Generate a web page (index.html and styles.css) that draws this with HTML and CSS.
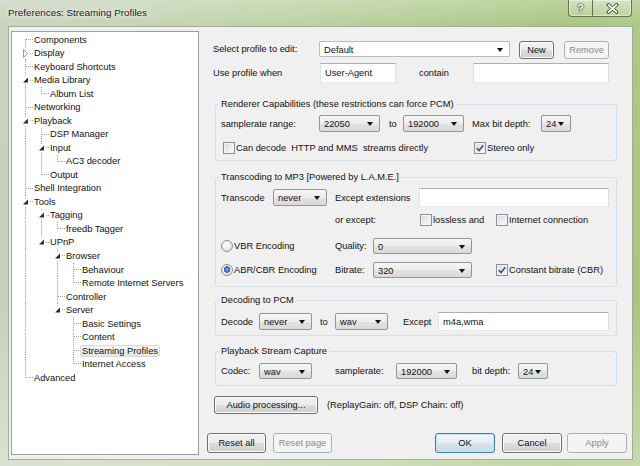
FILE: index.html
```html
<!DOCTYPE html>
<html>
<head>
<meta charset="utf-8">
<title>Preferences: Streaming Profiles</title>
<link rel="stylesheet" href="styles.css">
</head>
<body>
<div class="window">
  <div class="titlebar">
    <div class="title">Preferences: Streaming Profiles</div>
    <div class="caps">
      <div class="cap help">?</div>
      <div class="cap close">
        <svg width="13" height="11" viewBox="0 0 13 11"><path d="M2.5 2 L10.5 9 M10.5 2 L2.5 9" stroke="#3d4a35" stroke-width="3.6" stroke-linecap="round"/><path d="M2.5 2 L10.5 9 M10.5 2 L2.5 9" stroke="#fff" stroke-width="1.7" stroke-linecap="round"/></svg>
      </div>
    </div>
  </div>
  <div class="client">
    <div class="tree">
      <div class="row"><i class="g f"></i><span class="tx">Components</span></div>
      <div class="row"><i class="g t"><svg class="ex" width="7" height="9" viewBox="0 0 7 9"><path d="M1.5 0.5 L5.5 4.5 L1.5 8.5 Z" fill="#fff" stroke="#9a9a9a"/></svg></i><span class="tx">Display</span></div>
      <div class="row"><i class="g t"></i><span class="tx">Keyboard Shortcuts</span></div>
      <div class="row"><i class="g t"><svg class="ex" width="7" height="8" viewBox="0 0 7 8"><path d="M6 1.5 L6 6.5 L1 6.5 Z" fill="#2b2b2b"/></svg></i><span class="tx">Media Library</span></div>
      <div class="row"><i class="g v"></i><i class="g l"></i><span class="tx">Album List</span></div>
      <div class="row"><i class="g t"></i><span class="tx">Networking</span></div>
      <div class="row"><i class="g t"><svg class="ex" width="7" height="8" viewBox="0 0 7 8"><path d="M6 1.5 L6 6.5 L1 6.5 Z" fill="#2b2b2b"/></svg></i><span class="tx">Playback</span></div>
      <div class="row"><i class="g v"></i><i class="g t"></i><span class="tx">DSP Manager</span></div>
      <div class="row"><i class="g v"></i><i class="g t"><svg class="ex" width="7" height="8" viewBox="0 0 7 8"><path d="M6 1.5 L6 6.5 L1 6.5 Z" fill="#2b2b2b"/></svg></i><span class="tx">Input</span></div>
      <div class="row"><i class="g v"></i><i class="g v"></i><i class="g l"></i><span class="tx">AC3 decoder</span></div>
      <div class="row"><i class="g v"></i><i class="g l"></i><span class="tx">Output</span></div>
      <div class="row"><i class="g t"></i><span class="tx">Shell Integration</span></div>
      <div class="row"><i class="g t"><svg class="ex" width="7" height="8" viewBox="0 0 7 8"><path d="M6 1.5 L6 6.5 L1 6.5 Z" fill="#2b2b2b"/></svg></i><span class="tx">Tools</span></div>
      <div class="row"><i class="g v"></i><i class="g t"><svg class="ex" width="7" height="8" viewBox="0 0 7 8"><path d="M6 1.5 L6 6.5 L1 6.5 Z" fill="#2b2b2b"/></svg></i><span class="tx">Tagging</span></div>
      <div class="row"><i class="g v"></i><i class="g v"></i><i class="g l"></i><span class="tx">freedb Tagger</span></div>
      <div class="row"><i class="g v"></i><i class="g l"><svg class="ex" width="7" height="8" viewBox="0 0 7 8"><path d="M6 1.5 L6 6.5 L1 6.5 Z" fill="#2b2b2b"/></svg></i><span class="tx">UPnP</span></div>
      <div class="row"><i class="g v"></i><i class="g"></i><i class="g t"><svg class="ex" width="7" height="8" viewBox="0 0 7 8"><path d="M6 1.5 L6 6.5 L1 6.5 Z" fill="#2b2b2b"/></svg></i><span class="tx">Browser</span></div>
      <div class="row"><i class="g v"></i><i class="g"></i><i class="g v"></i><i class="g t"></i><span class="tx">Behaviour</span></div>
      <div class="row"><i class="g v"></i><i class="g"></i><i class="g v"></i><i class="g l"></i><span class="tx">Remote Internet Servers</span></div>
      <div class="row"><i class="g v"></i><i class="g"></i><i class="g t"></i><span class="tx">Controller</span></div>
      <div class="row"><i class="g v"></i><i class="g"></i><i class="g l"><svg class="ex" width="7" height="8" viewBox="0 0 7 8"><path d="M6 1.5 L6 6.5 L1 6.5 Z" fill="#2b2b2b"/></svg></i><span class="tx">Server</span></div>
      <div class="row"><i class="g v"></i><i class="g"></i><i class="g"></i><i class="g t"></i><span class="tx">Basic Settings</span></div>
      <div class="row"><i class="g v"></i><i class="g"></i><i class="g"></i><i class="g t"></i><span class="tx">Content</span></div>
      <div class="row"><i class="g v"></i><i class="g"></i><i class="g"></i><i class="g t"></i><span class="tx sel">Streaming Profiles</span></div>
      <div class="row"><i class="g v"></i><i class="g"></i><i class="g"></i><i class="g l"></i><span class="tx">Internet Access</span></div>
      <div class="row"><i class="g l"></i><span class="tx">Advanced</span></div>
    </div>

    <div class="main">
      <div class="page">
        <div class="line r1">
          <span class="lbl w106">Select profile to edit:</span>
          <div class="combo white w191"><span>Default</span><i class="arr"></i></div>
          <button class="btn small mr10 w35 ml9">New</button>
          <button class="btn small w45" disabled>Remove</button>
        </div>
        <div class="line r2">
          <span class="lbl w107">Use profile when</span>
          <div class="edit w76">User-Agent</div>
          <span class="lbl w54 ml23">contain</span>
          <div class="edit w136"></div>
        </div>

        <fieldset class="grp g1">
          <legend>Renderer Capabilities (these restrictions can force PCM)</legend>
          <div class="line h17">
            <span class="lbl w98">samplerate range:</span>
            <div class="combo w61"><span>22050</span><i class="arr"></i></div>
            <span class="lbl w14 ml9">to</span>
            <div class="combo w61"><span>192000</span><i class="arr"></i></div>
            <span class="lbl w69 ml8">Max bit depth:</span>
            <div class="combo w30"><span>24</span><i class="arr"></i></div>
          </div>
          <div class="line h13 mt9">
            <span class="opt w251 ml2"><span class="chk"></span>Can decode&nbsp; HTTP and MMS&nbsp; streams directly</span>
            <span class="opt"><span class="chk on"><svg width="10" height="10" viewBox="0 0 10 10"><path d="M1.8 5.2 L4 7.6 L8.4 2.2" fill="none" stroke="#3c4f7e" stroke-width="1.6"/></svg></span>Stereo only</span>
          </div>
        </fieldset>

        <fieldset class="grp g2">
          <legend>Transcoding to MP3 [Powered by L.A.M.E.]</legend>
          <div class="line h19">
            <span class="lbl w52">Transcode</span>
            <div class="combo w54"><span>never</span><i class="arr"></i></div>
            <span class="lbl w84 ml8">Except extensions</span>
            <div class="edit w190 h19"></div>
          </div>
          <div class="line h14 mt6">
            <span class="w114"></span>
            <span class="lbl w85">or except:</span>
            <span class="opt w76"><span class="chk"></span>lossless and</span>
            <span class="opt"><span class="chk"></span>Internet connection</span>
          </div>
          <div class="line h16 mt11">
            <span class="opt w114"><span class="rad"></span>VBR Encoding</span>
            <span class="lbl w38">Quality:</span>
            <div class="combo w99 h16"><span>0</span><i class="arr"></i></div>
          </div>
          <div class="line h16 mt8">
            <span class="opt w114"><span class="rad on"></span>ABR/CBR Encoding</span>
            <span class="lbl w38">Bitrate:</span>
            <div class="combo w99 h16"><span>320</span><i class="arr"></i></div>
            <span class="opt ml24"><span class="chk on"><svg width="10" height="10" viewBox="0 0 10 10"><path d="M1.8 5.2 L4 7.6 L8.4 2.2" fill="none" stroke="#3c4f7e" stroke-width="1.6"/></svg></span>Constant bitrate (CBR)</span>
          </div>
        </fieldset>

        <fieldset class="grp g3">
          <legend>Decoding to PCM</legend>
          <div class="line h19">
            <span class="lbl w38">Decode</span>
            <div class="combo w53"><span>never</span><i class="arr"></i></div>
            <span class="lbl w15 ml8">to</span>
            <div class="combo w53"><span>wav</span><i class="arr"></i></div>
            <span class="lbl w35 ml15">Except</span>
            <div class="edit w171 h19">m4a,wma</div>
          </div>
        </fieldset>

        <fieldset class="grp g4">
          <legend>Playback Stream Capture</legend>
          <div class="line h16">
            <span class="lbl w38">Codec:</span>
            <div class="combo w53 h16"><span>wav</span><i class="arr"></i></div>
            <span class="lbl w61 ml23">samplerate:</span>
            <div class="combo w61 h16"><span>192000</span><i class="arr"></i></div>
            <span class="lbl w46 ml15">bit depth:</span>
            <div class="combo w30 h16"><span>24</span><i class="arr"></i></div>
          </div>
        </fieldset>

        <div class="line audio">
          <button class="btn small w104">Audio processing...</button>
          <span class="lbl ml9">(ReplayGain: off, DSP Chain: off)</span>
        </div>
      </div>

      <div class="footer">
        <button class="btn w59">Reset all</button>
        <button class="btn w59 ml7" disabled>Reset page</button>
        <span class="spacer"></span>
        <button class="btn def w60">OK</button>
        <button class="btn w60 ml7">Cancel</button>
        <button class="btn w60 ml5" disabled>Apply</button>
      </div>
    </div>
  </div>
</div>
</body>
</html>
```

FILE: styles.css
```css
html, body {
  margin: 0;
  padding: 0;
}
body {
  width: 640px;
  height: 466px;
  overflow: hidden;
  font-family: "Liberation Sans", Arial, sans-serif;
  font-size: 9.3px;
  color: #111;
}

.window {
  width: 640px;
  height: 466px;
  display: flex;
  flex-direction: column;
  background:
    linear-gradient(180deg, rgba(255,255,255,0.28) 0, rgba(255,255,255,0.05) 26px, rgba(255,255,255,0) 300px, rgba(255,255,255,0.35) 100%),
    linear-gradient(90deg, #c7d0bd 0%, #c3d2b2 22%, #b9cf9f 45%, #adc88a 70%, #a3c279 88%, #a8c680 100%);
}

/* title bar */
.titlebar {
  height: 26px;
  flex: none;
  display: flex;
}
.title {
  padding-left: 8px;
  line-height: 26px;
  font-size: 9.85px;
  color: #1a1a1a;
  text-shadow: 0 0 6px rgba(255,255,255,0.9), 0 0 3px rgba(255,255,255,0.8);
}
.caps {
  margin: 0 8px 0 auto;
  height: 16px;
  display: flex;
  border: 1px solid #62744f;
  border-top: none;
  border-radius: 0 0 4px 4px;
  background: linear-gradient(180deg, rgba(255,255,255,0.35), rgba(255,255,255,0.12));
  box-shadow: inset 0 0 0 1px rgba(255,255,255,0.45);
}
.cap {
  display: flex;
  align-items: center;
  justify-content: center;
}
.help {
  width: 23px;
  border-right: 1px solid #62744f;
  font-weight: bold;
  font-size: 11px;
  color: #fff;
  text-shadow: 0 0 1px #3d4a35, 0 0 2px #3d4a35, 0 0 1px #3d4a35;
}
.close {
  width: 38px;
}

/* client */
.client {
  margin: 0 7px 6px 8px;
  height: 434px;
  box-sizing: border-box;
  border: 1px solid #a2ad97;
  background: #f0f0f0;
  display: flex;
}

/* tree */
.tree {
  width: 188px;
  height: 424px;
  flex: none;
  box-sizing: border-box;
  margin: 4px 0 0 2px;
  border: 1px solid #9c9c9c;
  background: #fff;
  padding: 1px 0 0 5px;
  overflow: hidden;
}
.row {
  display: flex;
  align-items: center;
  height: 13.52px;
  white-space: nowrap;
}
.g {
  width: 16px;
  height: 100%;
  flex: none;
  display: flex;
  align-items: center;
  justify-content: center;
  background-repeat: no-repeat;
}
.v {
  background-image: repeating-linear-gradient(180deg, #a3a3a3 0 1px, transparent 1px 2px);
  background-size: 1px 100%;
  background-position: 8px 0;
}
.t {
  background-image:
    repeating-linear-gradient(180deg, #a3a3a3 0 1px, transparent 1px 2px),
    repeating-linear-gradient(90deg, #a3a3a3 0 1px, transparent 1px 2px);
  background-size: 1px 100%, 7px 1px;
  background-position: 8px 0, 9px 6px;
}
.l {
  background-image:
    repeating-linear-gradient(180deg, #a3a3a3 0 1px, transparent 1px 2px),
    repeating-linear-gradient(90deg, #a3a3a3 0 1px, transparent 1px 2px);
  background-size: 1px 7px, 7px 1px;
  background-position: 8px 0, 9px 6px;
}
.f {
  background-image:
    repeating-linear-gradient(180deg, #a3a3a3 0 1px, transparent 1px 2px),
    repeating-linear-gradient(90deg, #a3a3a3 0 1px, transparent 1px 2px);
  background-size: 1px 8px, 7px 1px;
  background-position: 8px 6px, 9px 6px;
}
.ex {
  background: #fff;
  display: block;
}
.tx {
  padding: 0 1px;
  line-height: 12px;
  color: #111;
}
.sel {
  margin-left: -1px;
  border: 1px solid #d9d9d9;
  border-radius: 2px;
  background: linear-gradient(180deg, #f7f7f7, #e6e6e6);
  line-height: 10px;
}

/* right side */
.main {
  flex: 1;
  min-width: 0;
  display: flex;
  flex-direction: column;
}
.page {
  flex: 1;
  padding: 14px 0 0 14px;
}
.line {
  display: flex;
  align-items: center;
  white-space: nowrap;
}
.r1 {
  align-items: flex-start;
  height: 18px;
}
.r1 .lbl {
  line-height: 16px;
}
.r2 {
  height: 20px;
  margin-top: 4px;
}
.lbl {
  flex: none;
  white-space: nowrap;
}
.opt {
  flex: none;
  display: flex;
  align-items: center;
  white-space: nowrap;
}

/* group boxes */
.grp {
  margin: 0 15px 0 2px;
  padding: 0 5px;
  border: 1px solid #d5dfe5;
  border-radius: 3px;
  min-width: 0;
}
.grp legend {
  padding: 0 2px;
  margin-left: -2px;
  line-height: 12px;
}
.g1 { margin-top: 15px; padding-top: 5px; padding-bottom: 6px; }
.g2 { margin-top: 10px; padding-top: 5px; padding-bottom: 8px; }
.g3 { margin-top: 7px; padding-top: 6px; padding-bottom: 4px; }
.g4 { margin-top: 9px; padding-top: 6px; padding-bottom: 6px; }

.audio {
  margin-top: 10px;
  margin-left: 1px;
  height: 18px;
}

/* controls */
.combo {
  flex: none;
  height: 17px;
  box-sizing: border-box;
  border: 1px solid #959595;
  border-radius: 2px;
  background: linear-gradient(180deg, #f6f6f6 0%, #ededed 50%, #e2e2e2 51%, #dadada 100%);
  display: flex;
  align-items: center;
  justify-content: space-between;
  padding: 1px 0 0 4px;
}
.combo.white {
  height: 16px;
  background: #fff;
  border-color: #b9bcc1;
  border-radius: 1px;
}
.arr {
  width: 0;
  height: 0;
  border-left: 3.5px solid transparent;
  border-right: 3.5px solid transparent;
  border-top: 4px solid #111;
  margin-right: 6px;
}
.edit {
  flex: none;
  height: 20px;
  box-sizing: border-box;
  border: 1px solid;
  border-color: #abadb3 #dbdfe6 #e3e9ef #e2e3ea;
  background: #fff;
  padding-left: 4px;
  display: flex;
  align-items: center;
}
.btn {
  flex: none;
  height: 20px;
  box-sizing: border-box;
  margin: 0;
  padding: 0;
  border: 1px solid #707070;
  border-radius: 3px;
  background: linear-gradient(180deg, #f2f2f2 0%, #ebebeb 50%, #dddddd 51%, #cfcfcf 100%);
  box-shadow: inset 0 0 0 1px #fbfbfb;
  font: inherit;
  color: #111;
  display: flex;
  align-items: center;
  justify-content: center;
}
.btn.small {
  height: 18px;
}
.btn:disabled {
  border-color: #adb2b5;
  background: #f4f4f4;
  box-shadow: none;
  color: #8b8b8b;
}
.btn.def {
  border-color: #3c7fb1;
  box-shadow: inset 0 0 0 1px #bfe5fb;
  background: linear-gradient(180deg, #f0f5f8 0%, #e6eef3 50%, #d6e4ec 51%, #c9dae4 100%);
}
.chk {
  width: 12px;
  height: 12px;
  flex: none;
  box-sizing: border-box;
  border: 1px solid #8f8f8f;
  background: linear-gradient(135deg, #dadada, #fbfbfb);
  box-shadow: inset 0 0 0 1px #f3f3f3;
  margin-right: 1px;
  display: flex;
  align-items: center;
  justify-content: center;
}
.chk svg {
  display: block;
}
.rad {
  width: 12px;
  height: 12px;
  flex: none;
  box-sizing: border-box;
  border: 1px solid #8f8f8f;
  border-radius: 50%;
  background: radial-gradient(circle at 40% 35%, #ffffff 0, #e4e4e4 70%, #d2d2d2 100%);
  margin-right: 1px;
}
.rad.on {
  background:
    radial-gradient(circle at 50% 45%, #8cc8f5 0, #3a7fd0 1.8px, #1d4f9e 3px, rgba(29,79,158,0) 3.4px),
    radial-gradient(circle at 40% 35%, #ffffff 0, #e4e4e4 70%, #d2d2d2 100%);
}

/* footer */
.footer {
  flex: none;
  height: 20px;
  display: flex;
  margin: 0 5px 6px 8px;
}
.spacer {
  flex: 1;
}

/* sizes / spacing */
.h13 { height: 13px; }
.h14 { height: 14px; }
.h16 { height: 16px; }
.h17 { height: 17px; }
.h19 { height: 19px; }
.mt6 { margin-top: 6px; }
.mt8 { margin-top: 8px; }
.mt9 { margin-top: 9px; }
.mt11 { margin-top: 11px; }
.ml2 { margin-left: 2px; }
.ml5 { margin-left: 5px; }
.ml7 { margin-left: 7px; }
.ml8 { margin-left: 8px; }
.ml9 { margin-left: 9px; }
.ml15 { margin-left: 15px; }
.ml23 { margin-left: 23px; }
.ml24 { margin-left: 24px; }
.mr10 { margin-right: 10px; }
.w14 { width: 14px; }
.w15 { width: 15px; }
.w30 { width: 30px; }
.w35 { width: 35px; }
.w38 { width: 38px; }
.w45 { width: 45px; }
.w46 { width: 46px; }
.w52 { width: 52px; }
.w53 { width: 53px; }
.w54 { width: 54px; }
.w59 { width: 59px; }
.w60 { width: 60px; }
.w61 { width: 61px; }
.w69 { width: 69px; }
.w76 { width: 76px; }
.w84 { width: 84px; }
.w85 { width: 85px; }
.w98 { width: 98px; }
.w99 { width: 99px; }
.w104 { width: 104px; }
.w106 { width: 106px; }
.w107 { width: 107px; }
.w114 { width: 114px; flex: none; }
.w136 { width: 136px; }
.w171 { width: 171px; }
.w190 { width: 190px; }
.w191 { width: 191px; }
.w251 { width: 251px; }
```
